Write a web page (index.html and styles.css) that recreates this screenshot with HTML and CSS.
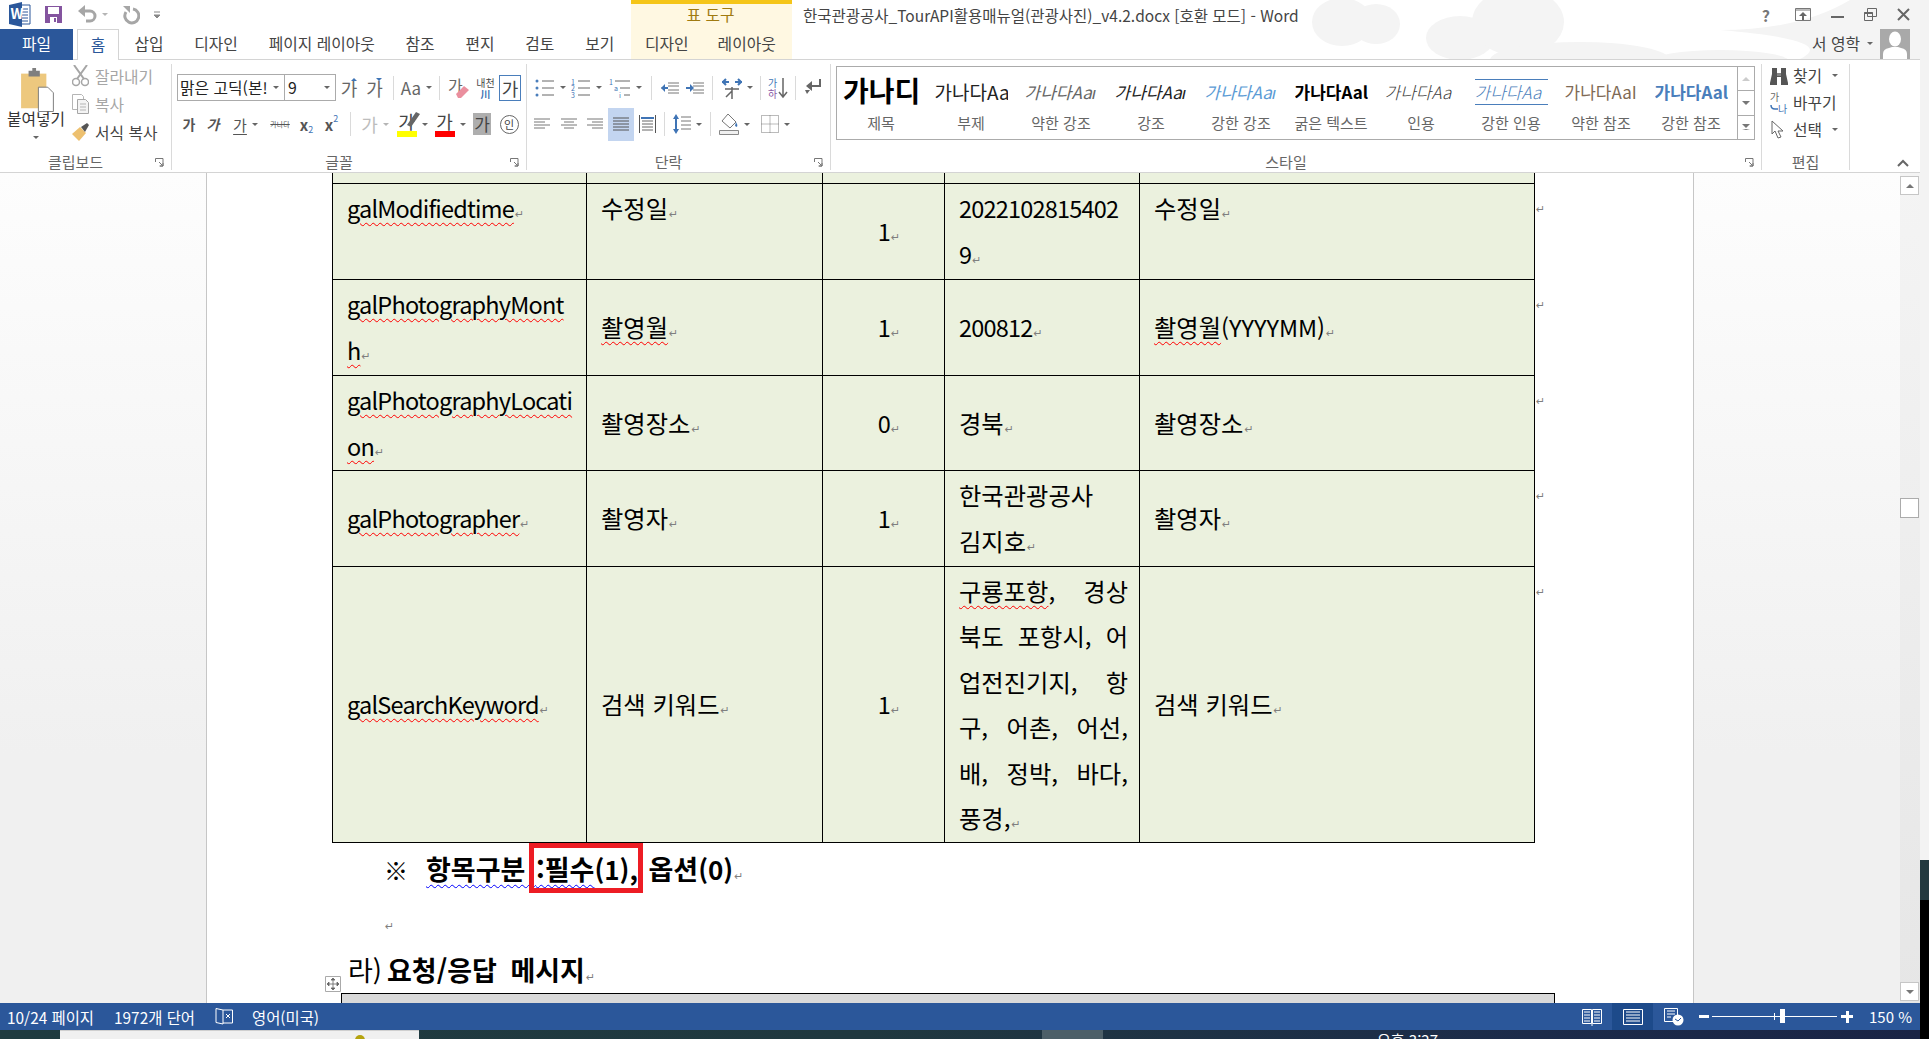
FILE: index.html
```html
<!DOCTYPE html>
<html lang="ko">

<head>
    <meta charset="UTF-8">
    <title>Word</title>
    <link rel="stylesheet" href="styles.css">
</head>

<body>
    <div class="app">
        <!-- title bar and tabs -->
        <header class="top">
            <svg class="clouds" width="640" height="59" viewBox="0 0 640 59">
                <g fill="#f4f4f4">
                    <ellipse cx="62" cy="22" rx="30" ry="24" />
                    <ellipse cx="96" cy="24" rx="24" ry="20" />
                    <ellipse cx="180" cy="38" rx="34" ry="22" />
                    <ellipse cx="238" cy="22" rx="46" ry="34" />
                    <ellipse cx="300" cy="60" rx="90" ry="18" />
                    <path d="M440 30 Q520 30 570 0 L640 0 L640 59 L520 59 Q560 40 440 30Z" />
                    <ellipse cx="440" cy="62" rx="70" ry="12" />
                </g>
            </svg>
            <div class="qat">
                <svg class="qat-word" width="22" height="25" viewBox="0 0 22 25">
                    <path d="M11 3h10v19H11z" fill="#fff" stroke="#2b579a" />
                    <path d="M13 7h6M13 10h6M13 13h6M13 16h6M13 19h6" stroke="#2b579a" />
                    <path d="M0 3l13-3v25L0 22z" fill="#2b579a" />
                    <text x="1.5" y="17" class="word-w">W</text>
                </svg>
                <svg class="qat-save" width="17" height="17" viewBox="0 0 17 17">
                    <path d="M0 0h17v17H0z" fill="#84549f" />
                    <path d="M3 1h11v7H3z" fill="#fff" />
                    <path d="M5 11h7v6H5z" fill="#fff" />
                    <path d="M9 12h2v4H9z" fill="#84549f" />
                </svg>
                <svg class="qat-undo" width="20" height="20" viewBox="0 0 20 20">
                    <path d="M3 6h9a5 5 0 0 1 0 10H8" fill="none" stroke="#a6a6a6" stroke-width="3" />
                    <path d="M7 0v12L0 6z" fill="#a6a6a6" />
                </svg>
                <span class="caret light"></span>
                <svg class="qat-redo" width="18" height="20" viewBox="0 0 18 20">
                    <path d="M11 4a7 7 0 1 1-7 3" fill="none" stroke="#a6a6a6" stroke-width="3" />
                    <path d="M1 1h7v7z" fill="#a6a6a6" />
                </svg>
                <svg class="qat-more" width="7" height="8" viewBox="0 0 7 8">
                    <path d="M0 1h6M0 4h6l-3 3z" stroke="#888" fill="#888" />
                </svg>
            </div>
            <div class="tools-tab">
                <div class="tools-title">표 도구</div>
                <div class="tools-links"><span>디자인</span><span>레이아웃</span></div>
            </div>
            <div class="title-row">
                <div class="doc-title">한국관광공사_TourAPI활용매뉴얼(관광사진)_v4.2.docx [호환 모드] - Word</div>
                <div class="win-btns">
                    <span class="win-help">?</span>
                    <svg width="16" height="13" viewBox="0 0 16 13">
                        <path d="M.5.5h15v12H.5z" fill="none" stroke="#777" />
                        <path d="M1 2h14" stroke="#777" />
                        <path d="M8 4l-4 4h3v4h2V8h3z" fill="#666" />
                    </svg>
                    <svg width="13" height="13" viewBox="0 0 13 13">
                        <path d="M0 9h13" stroke="#666" stroke-width="2" />
                    </svg>
                    <svg width="13" height="13" viewBox="0 0 13 13">
                        <path d="M3.5.5h9v8h-9zM.5 4.500h8v8h-8z" fill="none" stroke="#666" />
                        <path d="M.5 5h8" stroke="#666" stroke-width="2" />
                    </svg>
                    <svg width="13" height="13" viewBox="0 0 13 13">
                        <path d="M1 1l11 11M12 1L1 12" stroke="#666" stroke-width="2" />
                    </svg>
                </div>
            </div>
            <nav class="tabs">
                <span class="tab-file">파일</span>
                <span class="tab-home">홈</span>
                <span class="tab">삽입</span>
                <span class="tab">디자인</span>
                <span class="tab">페이지 레이아웃</span>
                <span class="tab">참조</span>
                <span class="tab">편지</span>
                <span class="tab">검토</span>
                <span class="tab">보기</span>
            </nav>
            <div class="user-row">
                <span class="user-name">서 영학</span>
                <span class="caret"></span>
                <svg class="avatar" width="30" height="30" viewBox="0 0 30 30">
                    <path d="M0 0h30v30H0z" fill="#a9a9a9" />
                    <ellipse cx="15" cy="10" rx="6" ry="7.500" fill="#fff" />
                    <path d="M3 30v-5q0-5 6-6l3-1h6l3 1q6 1 6 6v5z" fill="#fff" />
                </svg>
            </div>
        </header>

        <!-- ribbon -->
        <section class="ribbon">
            <div class="group g-clip">
                <div class="group-body clip-body">
                    <div class="paste">
                        <svg width="34" height="44" viewBox="0 0 36 47">
                            <path d="M1 6h27v37H1z" fill="#edc87e" />
                            <path d="M9 3h4V0h4v3h4v6H9z" fill="#7f7f7f" />
                            <path d="M19.500 20.500h10l6 6v20h-16z" fill="#fff" stroke="#777" />
                        </svg>
                        <span class="paste-label">붙여넣기</span>
                        <span class="caret"></span>
                    </div>
                    <div class="clip-list">
                        <div class="clip-item off">
                            <svg width="17" height="22" viewBox="0 0 17 22">
                                <path d="M2 0l10 14M15 0L5 14" stroke="#a6a6a6" stroke-width="2" />
                                <circle cx="4" cy="17" r="3.500" fill="none" stroke="#a6a6a6" stroke-width="1.500" />
                                <circle cx="13" cy="17" r="3.500" fill="none" stroke="#a6a6a6" stroke-width="1.500" />
                            </svg>잘라내기
                        </div>
                        <div class="clip-item off">
                            <svg width="17" height="20" viewBox="0 0 17 20">
                                <path d="M.5.5h9l2 2v13H.5z" fill="#fff" stroke="#b5b5b5" />
                                <path d="M5.500 5.500h8l3 3v11h-11z" fill="#f4f4f4" stroke="#a6a6a6" />
                                <path d="M8 10h6M8 13h6M8 16h6" stroke="#b5b5b5" />
                            </svg>복사
                        </div>
                        <div class="clip-item">
                            <svg width="17" height="18" viewBox="0 0 17 18">
                                <path d="M0 11l8-7 6 6-7 8z" fill="#edc06f" />
                                <path d="M9 4l6-4 2 2-4 7z" fill="#555" />
                            </svg>서식 복사
                        </div>
                    </div>
                </div>
                <div class="group-label">클립보드</div>
                <svg class="launcher" width="9" height="9" viewBox="0 0 9 9">
                    <path d="M.5 4V.5H8v7.500H4.500M4 4l4 4M8 5v3H5" fill="none" stroke="#777" />
                </svg>
            </div>

            <div class="group g-font">
                <div class="group-body">
                    <div class="tool-row row-one">
                        <div class="font-box">
                            <span class="font-name">맑은 고딕(본!</span><span class="caret"></span>
                        </div>
                        <div class="size-box"><span>9</span><span class="caret"></span></div>
                        <div class="tool w26"><span class="g-ga">가</span>
                            <span class="sup-arrow up"></span>
                        </div>
                        <div class="tool w25"><span class="g-ga">가</span>
                            <span class="sup-arrow down"></span>
                        </div>
                        <i class="sep"></i>
                        <div class="tool w33"><span class="g-aa">Aa</span><span class="caret"></span></div>
                        <i class="sep"></i>
                        <div class="tool w26">
                            <svg width="22" height="22" viewBox="0 0 22 22">
                                <text x="0" y="15" class="svg-ga">가</text>
                                <path d="M8 17l8-8 5 4-8 8h-3z" fill="#ea8f9e" />
                            </svg>
                        </div>
                        <div class="tool w27 stack">
                            <span class="tiny">내천</span>
                            <span class="tiny-blue">川</span>
                        </div>
                        <div class="tool boxed"><span class="g-ga dark">가</span></div>
                    </div>
                    <div class="tool-row row-two">
                        <div class="tool w24"><b class="g-small">가</b></div>
                        <div class="tool w24"><b class="g-small slant">가</b></div>
                        <div class="tool w41"><span class="g-small under">가</span><span class="caret"></span></div>
                        <div class="tool w28"><span class="g-strike">가나다</span></div>
                        <div class="tool w25"><b class="g-x">x</b><sub class="g-sub">2</sub></div>
                        <div class="tool w25"><b class="g-x">x</b><sup class="g-sup">2</sup></div>
                        <i class="sep"></i>
                        <div class="tool w36"><span class="g-ga ghost">가</span><span class="caret light"></span></div>
                        <div class="tool w38">
                            <span class="color-ga"><span class="g-ga dark">가</span><i class="bar yellow"></i>
                                <svg class="pen" width="13" height="16" viewBox="0 0 13 16">
                                    <path d="M0 14l9-13 4 2-9 13z" fill="#666" />
                                </svg>
                            </span>
                            <span class="caret"></span>
                        </div>
                        <div class="tool w38">
                            <span class="color-ga"><span class="g-ga dark">가</span><i class="bar red"></i></span>
                            <span class="caret"></span>
                        </div>
                        <div class="tool w26"><span class="g-shade">가</span></div>
                        <div class="tool w28"><span class="g-circle">인</span></div>
                    </div>
                </div>
                <div class="group-label">글꼴</div>
                <svg class="launcher" width="9" height="9" viewBox="0 0 9 9">
                    <path d="M.5 4V.5H8v7.500H4.500M4 4l4 4M8 5v3H5" fill="none" stroke="#777" />
                </svg>
            </div>

            <div class="group g-para">
                <div class="group-body">
                    <div class="tool-row row-one para-one">
                        <div class="tool w36">
                            <svg width="20" height="18" viewBox="0 0 20 18">
                                <circle cx="2" cy="2" r="1.500" fill="#4a7ebb" />
                                <circle cx="2" cy="9" r="1.500" fill="#4a7ebb" />
                                <circle cx="2" cy="16" r="1.500" fill="#4a7ebb" />
                                <path d="M7 2h12M7 9h12M7 16h12" stroke="#666" />
                            </svg><span class="caret"></span>
                        </div>
                        <div class="tool w36">
                            <svg width="20" height="20" viewBox="0 0 20 20">
                                <text x="0" y="7" class="svg-num">1</text>
                                <text x="0" y="13" class="svg-num">2</text>
                                <text x="0" y="20" class="svg-num">3</text>
                                <path d="M7 3h12M7 10h12M7 17h12" stroke="#666" />
                            </svg><span class="caret"></span>
                        </div>
                        <div class="tool w42">
                            <svg width="22" height="20" viewBox="0 0 22 20">
                                <text x="0" y="7" class="svg-num">1</text>
                                <text x="5" y="13" class="svg-num">a</text>
                                <text x="10" y="20" class="svg-num">i</text>
                                <path d="M6 3h15M11 10h10M15 17h6" stroke="#666" />
                            </svg><span class="caret"></span>
                        </div>
                        <i class="sep s5"></i>
                        <div class="tool w25">
                            <svg width="18" height="12" viewBox="0 0 18 12">
                                <path d="M7 1h11M7 4h11M0 6h6M7 8h11M7 11h11" stroke="#777" />
                                <path d="M0 6l4-4v8z" fill="#3f74b5" />
                                <path d="M2 5h5v2H2z" fill="#3f74b5" />
                            </svg>
                        </div>
                        <div class="tool w26">
                            <svg width="18" height="12" viewBox="0 0 18 12">
                                <path d="M7 1h11M7 4h11M7 8h11M7 11h11" stroke="#777" />
                                <path d="M8 6L4 2v8z" fill="#3f74b5" />
                                <path d="M0 5h5v2H0z" fill="#3f74b5" />
                            </svg>
                        </div>
                        <i class="sep s4"></i>
                        <div class="tool w40">
                            <svg width="20" height="22" viewBox="0 0 20 22">
                                <path d="M0 5h7M4 2L1 5l3 3M20 5h-7M16 2l3 3-3 3" fill="none" stroke="#3f74b5" stroke-width="2" />
                                <path d="M3 12h14M10 10v12M10 14l-6 6" stroke="#666" stroke-width="1.500" fill="none" />
                            </svg><span class="caret"></span>
                        </div>
                        <i class="sep s3"></i>
                        <div class="tool w28">
                            <svg width="20" height="22" viewBox="0 0 20 22">
                                <text x="0" y="10" class="svg-sort-a">가</text>
                                <text x="0" y="21" class="svg-sort-b">하</text>
                                <path d="M15 1v18M11 15l4 5 4-5" fill="none" stroke="#666" stroke-width="1.500" />
                            </svg>
                        </div>
                        <i class="sep s3"></i>
                        <div class="tool w28">
                            <svg width="18" height="18" viewBox="0 0 18 18">
                                <path d="M16 0v7H8" fill="none" stroke="#666" stroke-width="2" />
                                <path d="M8 2v10L2 7z" fill="#666" />
                                <path d="M1 11h5l-3 4z" fill="#666" />
                            </svg>
                        </div>
                    </div>
                    <div class="tool-row row-two para-two">
                        <div class="tool w26 align"><svg width="16" height="12" viewBox="0 0 16 12"><path d="M0 1h16M0 4h11M0 7h16M0 10h11" stroke="#777" /></svg></div>
                        <div class="tool w27 align"><svg width="16" height="12" viewBox="0 0 16 12"><path d="M0 1h16M3 4h10M0 7h16M3 10h10" stroke="#777" /></svg></div>
                        <div class="tool w26 align"><svg width="16" height="12" viewBox="0 0 16 12"><path d="M0 1h16M5 4h11M0 7h16M5 10h11" stroke="#777" /></svg></div>
                        <div class="tool w26 active"><svg width="16" height="14" viewBox="0 0 16 14"><path d="M0 1h16M0 4h16M0 7h16M0 10h16M0 13h16" stroke="#555" /></svg></div>
                        <div class="tool w27">
                            <svg width="17" height="18" viewBox="0 0 17 18">
                                <path d="M.5 0v18M16.500 0v18" stroke="#555" />
                                <path d="M3 3h11M3 6h11M3 9h11M3 12h11M3 15h11" stroke="#666" />
                                <path d="M2 3h13" stroke="#3f74b5" stroke-width="2" />
                            </svg>
                        </div>
                        <i class="sep s3"></i>
                        <div class="tool w39">
                            <svg width="18" height="20" viewBox="0 0 18 20">
                                <path d="M3 2v16" stroke="#3f74b5" stroke-width="2" />
                                <path d="M0 5l3-5 3 5zM0 15l3 5 3-5z" fill="#3f74b5" />
                                <path d="M8 3h10M8 7h10M8 11h10M8 15h10" stroke="#777" />
                            </svg><span class="caret"></span>
                        </div>
                        <i class="sep s3"></i>
                        <div class="tool w41">
                            <svg width="20" height="22" viewBox="0 0 20 22">
                                <path d="M9 1l8 8-6 6-8-7z" fill="#fff" stroke="#777" />
                                <path d="M17 9q2 3 1 5l-2-1z" fill="#3f74b5" />
                                <path d="M.5 17.500h19v4H.5z" fill="#f0f0f0" stroke="#888" />
                            </svg><span class="caret"></span>
                        </div>
                        <div class="tool w40">
                            <svg width="18" height="18" viewBox="0 0 18 18">
                                <path d="M.5.5h17v17H.5zM9 .5v17M.5 9h17" fill="none" stroke="#777" stroke-dasharray="1 1" />
                            </svg><span class="caret"></span>
                        </div>
                    </div>
                </div>
                <div class="group-label">단락</div>
                <svg class="launcher" width="9" height="9" viewBox="0 0 9 9">
                    <path d="M.5 4V.5H8v7.500H4.500M4 4l4 4M8 5v3H5" fill="none" stroke="#777" />
                </svg>
            </div>

            <div class="group g-style">
                <div class="group-body">
                    <div class="gallery">
                        <div class="gal-item"><span class="sample s-title">가나디</span><span class="gal-name">제목</span></div>
                        <div class="gal-item"><span class="sample s-sub">가나다Aa</span><span class="gal-name">부제</span></div>
                        <div class="gal-item"><span class="sample s-weak">가나다Aaı</span><span class="gal-name">약한 강조</span></div>
                        <div class="gal-item"><span class="sample s-em">가나다Aaı</span><span class="gal-name">강조</span></div>
                        <div class="gal-item"><span class="sample s-strong-em">가나다Aaı</span><span class="gal-name">강한 강조</span></div>
                        <div class="gal-item"><span class="sample s-bold">가나다Aal</span><span class="gal-name">굵은 텍스트</span></div>
                        <div class="gal-item"><span class="sample s-quote">가나다Aa</span><span class="gal-name">인용</span></div>
                        <div class="gal-item"><span class="sample s-quote2">가나다Aa</span><span class="gal-name">강한 인용</span></div>
                        <div class="gal-item"><span class="sample s-ref">가나다AaI</span><span class="gal-name">약한 참조</span></div>
                        <div class="gal-item"><span class="sample s-ref2">가나다Aal</span><span class="gal-name">강한 참조</span></div>
                        <div class="gal-scroll">
                            <span><i class="tri up light"></i></span>
                            <span><i class="tri down"></i></span>
                            <span><i class="tri-more"></i></span>
                        </div>
                    </div>
                </div>
                <div class="group-label">스타일</div>
                <svg class="launcher" width="9" height="9" viewBox="0 0 9 9">
                    <path d="M.5 4V.5H8v7.500H4.500M4 4l4 4M8 5v3H5" fill="none" stroke="#777" />
                </svg>
            </div>

            <div class="group g-edit">
                <div class="group-body edit-list">
                    <div class="edit-item">
                        <svg width="18" height="18" viewBox="0 0 18 18">
                            <path d="M2 1h5v5h4V1h5v6l2 9v2h-7v-8H7v8H0v-2l2-9z" fill="#555" />
                            <path d="M8 0v9M10 0v9" stroke="#fff" stroke-width=".6" />
                        </svg>찾기<span class="caret"></span>
                    </div>
                    <div class="edit-item">
                        <svg width="18" height="22" viewBox="0 0 18 22">
                            <text x="0" y="9" class="svg-rep">가</text>
                            <text x="8" y="21" class="svg-rep-b">나</text>
                            <path d="M1 13q0 4 4 4h3" fill="none" stroke="#3f74b5" stroke-width="1.500" />
                        </svg>바꾸기
                    </div>
                    <div class="edit-item">
                        <svg width="18" height="20" viewBox="0 0 18 20">
                            <path d="M2 1v13l3-3 3 7 3-1-3-6h5z" fill="#fff" stroke="#666" />
                        </svg>선택<span class="caret"></span>
                    </div>
                </div>
                <div class="group-label no-launcher">편집</div>
            </div>
            <svg class="collapse" width="12" height="8" viewBox="0 0 12 8">
                <path d="M1 7l5-5 5 5" fill="none" stroke="#666" stroke-width="2" />
            </svg>
        </section>

        <!-- document -->
        <main class="doc">
            <div class="gutter left-gutter"></div>
            <div class="page">
                <table class="spec">
                    <colgroup>
                        <col class="c1">
                        <col class="c2">
                        <col class="c3">
                        <col class="c4">
                        <col class="c5">
                    </colgroup>
                    <tr class="r-clip">
                        <td></td><td></td><td></td><td></td><td></td>
                    </tr>
                    <tr class="r96">
                        <td class="cell-top"><span class="sp la">galModifiedtime</span><span class="pm">↵</span></td>
                        <td class="cell-top">수정일<span class="pm">↵</span></td>
                        <td class="num"><span class="la">1</span><span class="pm">↵</span></td>
                        <td><span class="la">20221028154029</span><span class="pm">↵</span></td>
                        <td class="cell-top">수정일<span class="pm">↵</span><span class="pm row-end">↵</span></td>
                    </tr>
                    <tr class="r96">
                        <td><span class="sp la">galPhotographyMonth</span><span class="pm">↵</span></td>
                        <td><span class="sp">촬영월</span><span class="pm">↵</span></td>
                        <td class="num"><span class="la">1</span><span class="pm">↵</span></td>
                        <td><span class="la">200812</span><span class="pm">↵</span></td>
                        <td><span class="sp">촬영월</span><span class="caps">(YYYYMM)</span><span class="pm">↵</span><span class="pm row-end">↵</span></td>
                    </tr>
                    <tr class="r95">
                        <td><span class="sp la">galPhotographyLocation</span><span class="pm">↵</span></td>
                        <td>촬영장소<span class="pm">↵</span></td>
                        <td class="num"><span class="la">0</span><span class="pm">↵</span></td>
                        <td>경북<span class="pm">↵</span></td>
                        <td>촬영장소<span class="pm">↵</span><span class="pm row-end">↵</span></td>
                    </tr>
                    <tr class="r96">
                        <td><span class="sp la">galPhotographer</span><span class="pm">↵</span></td>
                        <td>촬영자<span class="pm">↵</span></td>
                        <td class="num"><span class="la">1</span><span class="pm">↵</span></td>
                        <td>한국관광공사<br>김지호<span class="pm">↵</span></td>
                        <td>촬영자<span class="pm">↵</span><span class="pm row-end">↵</span></td>
                    </tr>
                    <tr class="r276">
                        <td><span class="sp la">galSearchKeyword</span><span class="pm">↵</span></td>
                        <td>검색 키워드<span class="pm">↵</span></td>
                        <td class="num"><span class="la">1</span><span class="pm">↵</span></td>
                        <td class="keywords">
                            <span class="jl"><span class="sp">구룡포항</span>, 경상</span>
                            <span class="jl">북도 포항시, 어</span>
                            <span class="jl">업전진기지, 항</span>
                            <span class="jl">구, 어촌, 어선,</span>
                            <span class="jl">배, 정박, 바다,</span>
                            풍경,<span class="pm">↵</span>
                        </td>
                        <td>검색 키워드<span class="pm">↵</span><span class="pm row-end">↵</span></td>
                    </tr>
                </table>
                <p class="note"><span class="note-star">※</span><span class="sp-blue">항목구분 <span class="red-box">:필수</span></span><span class="la">(1),</span> 옵션<span class="la">(0)</span><span class="pm">↵</span></p>
                <p class="blank"><span class="pm">↵</span></p>
                <h2 class="heading"><span class="heading-num">라)</span>요청/응답 메시지<span class="pm">↵</span></h2>
                <div class="next-table">
                    <svg class="move-handle" width="16" height="16" viewBox="0 0 16 16">
                        <path d="M.5.5h15v15H.5z" fill="#fff" stroke="#aaa" />
                        <path d="M8 3v10M3 8h10M8 2l-2 2h4zM8 14l-2-2h4zM2 8l2-2v4zM14 8l-2-2v4z" stroke="#666" stroke-width=".8" fill="#666" />
                    </svg>
                </div>
            </div>
            <div class="gutter right-gutter"></div>
            <div class="vscroll">
                <span class="sb-btn"><i class="tri up"></i></span>
                <span class="sb-thumb"></span>
                <span class="sb-fill"></span>
                <span class="sb-btn"><i class="tri down"></i></span>
            </div>
        </main>

        <!-- status bar -->
        <footer class="status">
            <span class="st-pages">10/24 페이지</span>
            <span class="st-words">1972개 단어</span>
            <svg class="st-book" width="19" height="18" viewBox="0 0 19 18">
                <path d="M8 2L1 .5v14l7 1.500zM8 2h9.500v13H8" fill="none" stroke="#fff" />
                <path d="M11 6l4 4M15 6l-4 4" stroke="#fff" />
            </svg>
            <span class="st-lang">영어(미국)</span>
            <div class="st-right">
                <span class="view">
                    <svg width="20" height="18" viewBox="0 0 20 18">
                        <path d="M.5 1.500h9v14h-9zM10.500 1.500h9v14h-9z" fill="none" stroke="#fff" />
                        <path d="M2 4h6M2 7h6M2 10h6M2 13h6M12 4h6M12 7h6M12 10h6M12 13h6M10 15v3" stroke="#fff" />
                    </svg>
                </span>
                <span class="view view-on">
                    <svg width="20" height="18" viewBox="0 0 20 18">
                        <path d="M.5 1.500h19v15H.5z" fill="none" stroke="#fff" />
                        <path d="M3 4h14M3 7h14M3 10h14M3 13h14" stroke="#fff" />
                    </svg>
                </span>
                <span class="view">
                    <svg width="20" height="18" viewBox="0 0 20 18">
                        <path d="M.5.500h13v13H.5z" fill="none" stroke="#fff" />
                        <path d="M3 3h8M3 6h8M3 9h4" stroke="#fff" />
                        <circle cx="14" cy="12" r="5.500" fill="#fff" />
                        <path d="M11 11l3 2 3-3" stroke="#2b579a" fill="none" />
                    </svg>
                </span>
                <span class="zoom-minus"></span>
                <span class="zoom-track"><i class="zoom-tick"></i><i class="zoom-thumb"></i></span>
                <span class="zoom-plus"></span>
                <span class="zoom-value">150 %</span>
            </div>
        </footer>

        <!-- the desktop taskbar shows below the window -->
        <div class="taskbar">
            <span class="task-window"><i class="task-dot"></i></span>
            <span class="task-gray"></span>
            <span class="task-clock">오후 3:27</span>
        </div>
    </div>
    <div class="desk-strip">
        <span class="strip-light"></span>
        <span class="strip-teal"></span>
    </div>
</body>

</html>
```

FILE: styles.css
```css
* {
    box-sizing: border-box;
}

html,
body {
    margin: 0;
    height: 1039px;
    overflow: hidden;
}

body {
    display: flex;
    width: 1929px;
    background-color: #000;
    font-family: "Noto Sans CJK KR", "Noto Sans", sans-serif;
    color: #444;
}

.app {
    width: 1920px;
    height: 1039px;
    display: flex;
    flex-direction: column;
    background-color: #fff;
}

.desk-strip {
    width: 9px;
    display: flex;
    flex-direction: column;
}

.strip-light {
    height: 860px;
    background-color: #f3f3f3;
}

.strip-teal {
    height: 40px;
    background-color: #22393f;
}

/* title bar + tabs */
.top {
    position: relative;
    height: 60px;
    display: grid;
    grid-template-columns: 631px 161px 1fr;
    grid-template-rows: 29px 31px;
    border-bottom: 1px solid #d4d4d4;
}

.clouds {
    position: absolute;
    right: 0;
    top: 0;
}

.qat,
.tools-tab,
.title-row,
.tabs,
.user-row {
    position: relative;
}

.qat {
    display: flex;
    align-items: center;
    padding-left: 9px;
}

.word-w {
    font-size: 14px;
    font-weight: 700;
    fill: #fff;
}

.qat-save {
    margin-left: 14px;
}

.qat-undo {
    margin-left: 16px;
}

.qat-redo {
    margin-left: 14px;
}

.qat-more {
    margin-left: 14px;
}

.qat .caret {
    margin-left: 4px;
}

.tools-tab {
    grid-column: 2;
    grid-row: 1 / 3;
    margin-bottom: 1px;
    background-color: #fff8e2;
    border-top: 4px solid #f5c518;
    text-align: center;
}

.tools-title {
    height: 25px;
    padding-right: 2px;
    line-height: 22px;
    font-size: 15.800px;
    color: #a07a10;
}

.tools-links {
    display: flex;
    gap: 29px;
    padding-left: 14px;
    font-size: 15.800px;
    line-height: 30px;
}

.title-row {
    display: flex;
    align-items: center;
    padding-left: 11px;
}

.doc-title {
    font-size: 15.500px;
    white-space: nowrap;
}

.win-btns {
    display: flex;
    align-items: center;
    gap: 20px;
    margin-left: auto;
    padding-right: 10px;
}

.win-help {
    font-size: 16px;
    font-weight: 700;
    color: #777;
    margin-right: 5px;
}

.tabs {
    grid-column: 1;
    grid-row: 2;
    display: flex;
    font-size: 15.800px;
    line-height: 30px;
}

.tab-file {
    width: 73px;
    background-color: #2b579a;
    color: #fff;
    text-align: center;
}

.tab-home {
    width: 42px;
    height: 31px;
    margin-left: 4px;
    background-color: #fff;
    border: 1px solid #d4d4d4;
    border-bottom: none;
    color: #2b579a;
    text-align: center;
    line-height: 29px;
}

.tab {
    padding: 0 15.400px;
    white-space: nowrap;
}

.user-row {
    grid-column: 3;
    grid-row: 2;
    display: flex;
    align-items: flex-start;
    justify-content: flex-end;
    padding-right: 10px;
    font-size: 15.800px;
    line-height: 29px;
}

.user-name {
    margin-right: 7px;
}

.user-row .caret {
    margin-top: 13px;
    margin-right: 7px;
}

.avatar {
    display: block;
}

.caret {
    display: inline-block;
    flex: none;
    width: 0;
    height: 0;
    border-left: 3.500px solid transparent;
    border-right: 3.500px solid transparent;
    border-top: 3.500px solid #666;
}

.caret.light {
    border-top-color: #b5b5b5;
}

/* ribbon */
.ribbon {
    position: relative;
    height: 113px;
    display: flex;
    border-bottom: 1px solid #d4d4d4;
}

.group {
    position: relative;
    height: 106px;
    margin-top: 4px;
    display: flex;
    flex-direction: column;
    border-right: 1px solid #dadada;
}

.group-body {
    height: 91px;
}

.group-label {
    height: 14px;
    padding-right: 20px;
    line-height: 14px;
    font-size: 15px;
    color: #666;
    text-align: center;
    white-space: nowrap;
}

.group-label.no-launcher {
    padding-right: 0;
}

.launcher {
    position: absolute;
    right: 7px;
    bottom: 3px;
}

.g-clip {
    width: 172px;
}

.g-font {
    width: 355px;
}

.g-para {
    width: 304px;
}

.g-style {
    width: 931px;
}

.g-edit {
    width: 88px;
}

.collapse {
    position: absolute;
    right: 11px;
    bottom: 5px;
}

.clip-body {
    display: flex;
}

.paste {
    width: 72px;
    display: flex;
    flex-direction: column;
    align-items: center;
    padding-top: 4px;
    font-size: 15.800px;
    color: #333;
}

.paste svg {
    margin-left: 2px;
    display: block;
}

.paste-label {
    line-height: 14px;
}

.paste .caret {
    margin-top: 10px;
}

.clip-list {
    margin-top: -2px;
    font-size: 15.800px;
}

.clip-item {
    height: 28px;
    display: flex;
    align-items: center;
    gap: 6px;
    color: #444;
    white-space: nowrap;
}

.clip-item svg {
    flex: none;
}

.clip-item.off {
    color: #a6a6a6;
}

.tool-row {
    display: flex;
    align-items: center;
}

.row-one {
    height: 27px;
    margin-top: 10px;
    padding-left: 5px;
}

.row-two {
    height: 26px;
    margin-top: 10px;
    padding-left: 5px;
}

.para-two {
    padding-left: 2px;
}

.font-box,
.size-box {
    height: 27px;
    display: flex;
    align-items: center;
    justify-content: space-between;
    border: 1px solid #ababab;
    padding: 0 5px 0 2px;
    font-size: 15.800px;
    color: #222;
    background-color: #fff;
}

.font-box {
    width: 108px;
}

.font-name {
    white-space: nowrap;
    overflow: hidden;
    width: 92px;
}

.size-box {
    width: 52px;
    margin-left: -1px;
    padding: 0 5px 0 3px;
}

.tool {
    position: relative;
    height: 24px;
    flex: none;
    display: flex;
    align-items: center;
    justify-content: center;
    gap: 5px;
}

.w24 { width: 24px; }
.w25 { width: 25px; }
.w26 { width: 26px; }
.w27 { width: 27px; }
.w28 { width: 28px; }
.w33 { width: 33px; }
.w36 { width: 36px; }
.w38 { width: 38px; }
.w39 { width: 39px; }
.w40 { width: 40px; }
.w41 { width: 41px; }
.w42 { width: 42px; }

.sep {
    display: block;
    flex: none;
    width: 1px;
    height: 24px;
    margin: 0 6px;
    background-color: #dadada;
}

.sep.s5 {
    margin: 0 5px;
}

.sep.s4 {
    margin: 0 4px;
}

.sep.s3 {
    margin: 0 3px;
}

.g-ga {
    font-size: 18px;
    line-height: 20px;
    color: #666;
}

.g-ga.dark {
    color: #444;
}

.g-ga.ghost {
    color: #bdbdbd;
}

.g-aa {
    font-size: 17px;
    color: #666;
}

.sup-arrow {
    position: absolute;
    top: 2px;
    right: 5px;
    width: 0;
    height: 0;
    border-left: 3px solid transparent;
    border-right: 3px solid transparent;
}

.sup-arrow.up {
    border-bottom: 3px solid #3f74b5;
}

.sup-arrow.down {
    border-top: 3px solid #3f74b5;
}

.svg-ga {
    font-size: 16px;
    fill: #666;
}

.stack {
    flex-direction: column;
    gap: 0;
}

.tiny {
    font-size: 10px;
    line-height: 11px;
    color: #444;
}

.tiny-blue {
    font-size: 10px;
    line-height: 11px;
    color: #3f74b5;
    font-weight: 700;
}

.boxed {
    width: 22px;
    height: 26px;
    border: 1px solid #4a7ebb;
}

.g-small {
    font-size: 14px;
    color: #555;
}

.slant {
    font-style: italic;
}

.under {
    text-decoration: underline;
    text-underline-offset: 3px;
    font-weight: 400;
    font-size: 15px;
}

.g-strike {
    font-size: 7px;
    text-decoration: line-through;
    color: #555;
}

.g-x {
    font-size: 15px;
    color: #555;
}

.g-sub,
.g-sup {
    font-size: 9px;
    line-height: 9px;
    color: #3f74b5;
    margin-left: -5px;
}

.g-sub {
    align-self: flex-end;
    margin-bottom: 2px;
}

.g-sup {
    align-self: flex-start;
    margin-top: 2px;
}

.color-ga {
    position: relative;
    display: inline-flex;
    flex-direction: column;
    align-items: center;
    gap: 0;
}

.pen {
    position: absolute;
    right: -3px;
    top: 0;
}

.bar {
    display: block;
    width: 20px;
    height: 6px;
}

.bar.yellow {
    background-color: #ffff00;
}

.bar.red {
    background-color: #ff0000;
}

.g-shade {
    width: 18px;
    height: 22px;
    background-color: #aeaeae;
    text-align: center;
    font-size: 17px;
    line-height: 22px;
    color: #444;
}

.g-circle {
    width: 19px;
    height: 19px;
    border: 1px solid #666;
    border-radius: 50%;
    text-align: center;
    font-size: 11px;
    line-height: 17px;
    color: #444;
}

.svg-num {
    font-size: 7px;
    fill: #3f74b5;
}

.svg-sort-a {
    font-size: 10px;
    fill: #3f74b5;
}

.svg-sort-b {
    font-size: 10px;
    fill: #8a5aa5;
}

.active {
    background-color: #c3d5f0;
    height: 33px;
}

/* style gallery */
.gallery {
    width: 919px;
    height: 74px;
    margin: 2px 0 0 5px;
    display: flex;
    border: 1px solid #ababab;
}

.gal-item {
    width: 90px;
    flex: none;
    display: flex;
    flex-direction: column;
    align-items: center;
}

.gal-item:first-child {
    margin-left: -1px;
}

.sample {
    display: block;
    width: 73px;
    height: 34px;
    margin-top: 8px;
    overflow: hidden;
    white-space: nowrap;
    text-align: left;
    font-size: 17px;
    line-height: 34px;
    color: #000;
}

.s-title {
    font-size: 28px;
    font-weight: 700;
    width: 76px;
    line-height: 31px;
}

.s-sub {
    font-size: 19px;
    color: #222;
}

.s-weak {
    font-style: italic;
    color: #666;
}

.s-em {
    font-style: italic;
    color: #222;
}

.s-strong-em {
    font-style: italic;
    color: #5b9bd5;
}

.s-bold {
    font-weight: 700;
}

.s-quote {
    font-style: italic;
    font-weight: 300;
    color: #404040;
}

.s-quote2 {
    font-style: italic;
    font-weight: 300;
    color: #4a7ebb;
    line-height: 24px;
    height: 26px;
    margin-top: 12px;
    margin-bottom: 4px;
    border-top: 1px solid #4a7ebb;
    border-bottom: 1px solid #4a7ebb;
}

.s-ref {
    color: #7f6a55;
}

.s-ref2 {
    font-weight: 700;
    color: #4a7ebb;
}

.gal-name {
    margin-top: 4px;
    font-size: 15px;
    line-height: 20px;
    color: #666;
    white-space: nowrap;
}

.gal-scroll {
    width: 17px;
    margin-left: auto;
    display: flex;
    flex-direction: column;
    border-left: 1px solid #ababab;
}

.gal-scroll span {
    flex: 1;
    display: flex;
    align-items: center;
    justify-content: center;
    border-bottom: 1px solid #ababab;
}

.gal-scroll span:last-child {
    border-bottom: none;
}

.tri {
    display: block;
    width: 0;
    height: 0;
    border-left: 4px solid transparent;
    border-right: 4px solid transparent;
}

.tri.up {
    border-bottom: 4px solid #777;
}

.tri.up.light {
    border-bottom-color: #ccc;
}

.tri.down {
    border-top: 4px solid #777;
}

.tri-more {
    display: block;
    width: 0;
    height: 6px;
    border-left: 4px solid transparent;
    border-right: 4px solid transparent;
    border-top: 1px solid #777;
    border-bottom: 4px solid #777;
    transform: scaleY(-1);
}

.edit-list {
    padding: 0 0 0 8px;
}

.edit-item {
    height: 27px;
    display: flex;
    align-items: center;
    gap: 5px;
    font-size: 15.800px;
    color: #444;
    white-space: nowrap;
}

.edit-item:first-child {
    margin-top: -2px;
}

.edit-item .caret {
    margin-left: 5px;
}

.svg-rep {
    font-size: 10px;
    fill: #666;
}

.svg-rep-b {
    font-size: 10px;
    fill: #3f74b5;
}

/* document */
.doc {
    height: 830px;
    display: flex;
    overflow: hidden;
}

.gutter {
    background: linear-gradient(#fdfdfd, #f0f0f0 70%);
}

.left-gutter {
    width: 206px;
}

.right-gutter {
    flex: 1;
}

.page {
    width: 1488px;
    height: 830px;
    overflow: hidden;
    flex: none;
    background-color: #fff;
    border-left: 1px solid #c6c6c6;
    border-right: 1px solid #c6c6c6;
    padding-left: 125px;
    color: #000;
}

.spec {
    table-layout: fixed;
    width: 1202px;
    border-collapse: collapse;
    background-color: #ebf1de;
    font-size: 24.300px;
    line-height: 46px;
}

.c1 { width: 254px; }
.c2 { width: 236px; }
.c3 { width: 122px; }
.c4 { width: 195px; }
.c5 { width: 395px; }

.spec td {
    position: relative;
    border: 1px solid #000;
    padding: 1px 11px 1px 14px;
    word-break: break-all;
    vertical-align: middle;
}

.spec tr.r-clip td {
    border-top: none;
    padding: 0;
    height: 10px;
    font-size: 0;
    line-height: 0;
}

.r96 td {
    height: 96px;
}

.r95 td {
    height: 95px;
}

.r276 td {
    height: 276px;
}

.spec td.cell-top {
    vertical-align: top;
}

.spec td.num {
    text-align: center;
    padding-left: 22px;
}

.spec td.keywords {
    padding-top: 0;
    padding-bottom: 0;
    line-height: 45.500px;
}

.jl {
    display: block;
    text-align-last: justify;
}

/* latin glyphs of Malgun run narrower than the CJK font's */
.la {
    font-size: 23.500px;
    letter-spacing: -0.8px;
}

.caps {
    font-size: 23.500px;
}

.sp {
    text-decoration: underline wavy #ff0000 1px;
    text-underline-offset: 4px;
}

.pm {
    font-family: "DejaVu Sans", sans-serif;
    font-size: 11px;
    line-height: 0;
    font-weight: 400;
    color: #7f7f7f;
    margin-left: 1px;
}

.row-end {
    position: absolute;
    left: 100%;
    top: 26px;
    margin-left: 2px;
}

.note {
    height: 56px;
    margin: 0 0 0 54px;
    line-height: 52px;
    font-size: 27px;
    font-weight: 700;
    word-spacing: 3px;
    white-space: nowrap;
}

.note .la {
    font-size: 26px;
    letter-spacing: 0;
}

.note-star {
    display: inline-block;
    width: 42px;
    font-weight: 400;
    font-size: 24px;
    margin-left: -2px;
}

.sp-blue {
    text-decoration: underline wavy #0000ff 1px;
    text-underline-offset: 4px;
}

.red-box {
    position: relative;
}

.red-box::after {
    content: "";
    box-sizing: border-box;
    position: absolute;
    left: -7px;
    top: -6px;
    width: 114px;
    height: 50px;
    border: 5px solid #ed1c24;
}

.blank {
    height: 52px;
    margin: 0 0 0 52px;
    line-height: 48px;
}

.heading {
    height: 42px;
    margin: 0 0 0 16px;
    line-height: 38px;
    font-size: 27px;
    font-weight: 700;
    word-spacing: 6px;
    white-space: nowrap;
}

.heading-num {
    font-weight: 400;
    margin-right: 5px;
}

.next-table {
    position: relative;
    width: 1214px;
    height: 20px;
    margin-left: 9px;
    background-color: #d9d9d9;
    border: 1px solid #000;
}

.move-handle {
    position: absolute;
    left: -17px;
    top: -18px;
}

.vscroll {
    width: 20px;
    padding-right: 1px;
    display: flex;
    flex-direction: column;
    padding-top: 3px;
    padding-bottom: 2px;
    background: linear-gradient(#f4f4f4, #e6e6e6);
}

.sb-btn {
    height: 19px;
    flex: none;
    display: flex;
    align-items: center;
    justify-content: center;
    background-color: #fff;
    border: 1px solid #c6c6c6;
}

.sb-thumb {
    height: 20px;
    margin-top: 303px;
    background-color: #fff;
    border: 1px solid #ababab;
}

.sb-fill {
    flex: 1;
}

/* status bar */
.status {
    height: 27px;
    display: flex;
    align-items: center;
    background-color: #2b579a;
    color: #fff;
    font-size: 15.400px;
    white-space: nowrap;
}

.st-pages {
    margin-left: 7px;
}

.st-words {
    margin-left: 20px;
}

.st-book {
    margin-left: 20px;
}

.st-lang {
    margin-left: 18px;
}

.st-right {
    margin-left: auto;
    display: flex;
    align-items: center;
    height: 27px;
}

.view {
    width: 41px;
    height: 27px;
    display: flex;
    align-items: center;
    justify-content: center;
}

.view-on {
    background-color: #1d4a8a;
}

.zoom-minus {
    width: 10px;
    height: 3px;
    margin-left: 5px;
    background-color: #fff;
}

.zoom-track {
    position: relative;
    width: 125px;
    height: 1px;
    margin-left: 3px;
    background-color: #fff;
}

.zoom-tick {
    position: absolute;
    left: 62px;
    top: -3px;
    width: 1px;
    height: 7px;
    background-color: #fff;
}

.zoom-thumb {
    position: absolute;
    left: 68px;
    top: -7px;
    width: 5px;
    height: 14px;
    background-color: #fff;
}

.zoom-plus {
    position: relative;
    width: 12px;
    height: 12px;
    margin-left: 4px;
    background: linear-gradient(#fff, #fff) center / 12px 3px no-repeat, linear-gradient(#fff, #fff) center / 3px 12px no-repeat;
}

.zoom-value {
    margin-left: 16px;
    margin-right: 8px;
    font-size: 15px;
}

/* desktop behind the window */
.taskbar {
    height: 9px;
    flex: none;
    display: flex;
    overflow: hidden;
    background: linear-gradient(90deg, #1f3b40, #20383f 45%, #1c2b4a 80%, #1a2445);
}

.task-window {
    position: relative;
    width: 359px;
    margin-left: 60px;
    background-color: #f0f0f0;
    border-top: 1px solid #cfcfcf;
}

.task-dot {
    position: absolute;
    left: 295px;
    top: 4px;
    width: 10px;
    height: 10px;
    border-radius: 50%;
    background-color: #b5a30f;
}

.task-gray {
    width: 61px;
    margin-left: 623px;
    background-color: #4d5f68;
}

.task-clock {
    margin-left: 274px;
    color: #fff;
    font-size: 15px;
    line-height: 20px;
    white-space: nowrap;
}
```
